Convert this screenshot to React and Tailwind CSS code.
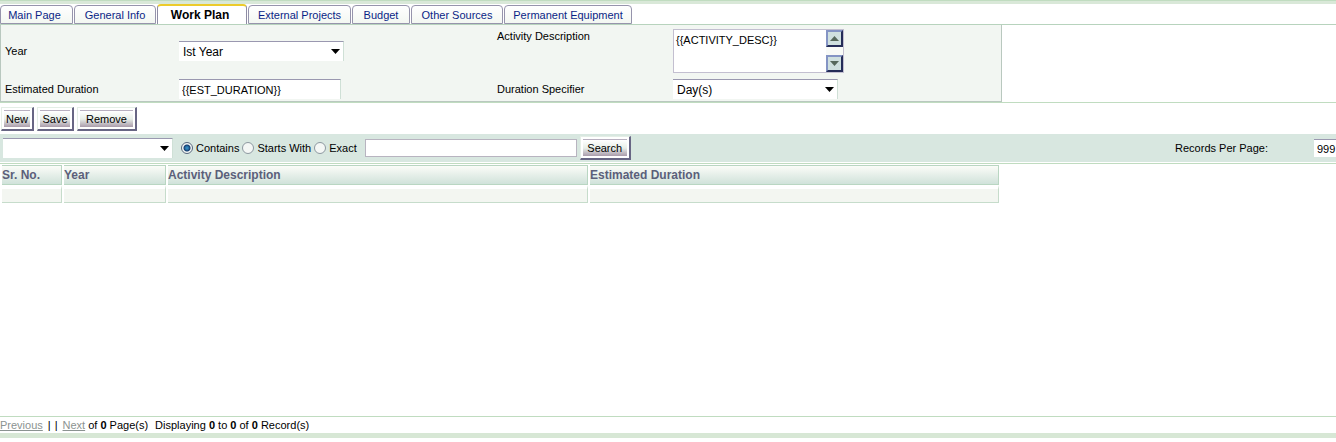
import React, { useState } from 'react';

const tabs = [
    { label: 'Main Page', width: 'w-[73px] pr-1' },
    { label: 'General Info', width: 'w-[82px]' },
    { label: 'Work Plan', width: 'w-[90px] pr-1' },
    { label: 'External Projects', width: 'w-[103px]' },
    { label: 'Budget', width: 'w-[58px]' },
    { label: 'Other Sources', width: 'w-[92px]' },
    { label: 'Permanent Equipment', width: 'w-[128px]' },
];

const columns = [
    { label: 'Sr. No.', width: 'w-[60px]' },
    { label: 'Year', width: 'w-[102px]' },
    { label: 'Activity Description', width: 'w-[420px]' },
    { label: 'Estimated Duration', width: 'w-[409px]' },
];

const matchModes = ['Contains', 'Starts With', 'Exact'];

const Caret = ({ up = false, className = '' }) => (
    <svg width="9" height="5" viewBox="0 0 9 5" className={className} aria-hidden="true">
        <path d={up ? 'M0 5 L4.5 0 L9 5 Z' : 'M0 0 L9 0 L4.5 5 Z'} fill="currentColor" />
    </svg>
);

const BevelButton = ({ children, className = '', ...props }) => (
    <button
        type="button"
        className={`flex h-6 border-t border-l border-t-[#e4eee6] border-l-[#e4eee6] border-r-2 border-b-2 border-r-[#686684] border-b-[#686684] bg-white p-0.5 text-[11px] ${className}`}
        {...props}
    >
        <span className="flex h-full w-full items-center justify-center border-t border-[#b8b0c0] bg-linear-to-b from-white via-[#e8efe8] to-[#aa9cab]">
            {children}
        </span>
    </button>
);

const SelectBox = ({ id, label, options, className = '' }) => (
    <div className={`relative ${className}`}>
        <select
            id={id}
            aria-label={label}
            className="block h-full w-full appearance-none border-t border-r border-t-[#9a98b0] border-r-[#cfe0d6] bg-white pl-1 text-[12px] outline-none"
        >
            {options.map((option) => (
                <option key={option}>{option}</option>
            ))}
        </select>
        <Caret className="pointer-events-none absolute top-2 right-1" />
    </div>
);

const ScrollButton = ({ up = false }) => (
    <button
        type="button"
        aria-label={up ? 'Scroll up' : 'Scroll down'}
        className="flex h-[17px] w-[17px] items-center justify-center border-t-2 border-l-2 border-r-2 border-b-2 border-t-[#8494c4] border-l-[#8494c4] border-r-[#242c58] border-b-[#242c58] bg-[#cfe0df] text-[#56685c]"
    >
        <Caret up={up} />
    </button>
);

const TabBar = () => {
    const [active, setActive] = useState('Work Plan');

    return (
        <nav className="flex h-5 items-end gap-px border-b border-[#b7d3bd] pr-4">
            {tabs.map(({ label, width }) => (
                <button
                    key={label}
                    type="button"
                    onClick={() => setActive(label)}
                    className={`${width} shrink-0 rounded-t-sm border-x whitespace-nowrap ${
                        active === label
                            ? 'h-5 border-t-2 border-x-[#8e8ca4] border-t-[#eccb2c] bg-white text-[12px] font-bold text-black'
                            : 'h-[19px] border-t border-b border-[#9694ac] bg-linear-to-b from-white to-[#f3f7f2] text-[11px] text-[#0a1f86]'
                    }`}
                >
                    {label}
                </button>
            ))}
        </nav>
    );
};

const PlanForm = () => (
    <form className="grid w-3/4 grid-cols-[174px_318px_176px_1fr] border-x border-b border-[#b9c8bf] bg-[#f2f6f2] pl-1">
        <label htmlFor="year" className="self-center">Year</label>
        <SelectBox id="year" options={['Ist Year', '2nd Year', '3rd Year']} className="h-5 w-[165px] self-center" />
        <label htmlFor="activity" className="pt-[3px]">Activity Description</label>
        <div className="my-1 flex h-11 w-[171px] border border-[#c3bfd0] bg-white">
            <textarea
                id="activity"
                defaultValue="{{ACTIVITY_DESC}}"
                className="min-w-0 flex-1 resize-none overflow-hidden bg-transparent px-0.5 pt-0.5 outline-none"
            />
            <div className="flex flex-col justify-between bg-[#f8faf7]">
                <ScrollButton up />
                <ScrollButton />
            </div>
        </div>

        <label htmlFor="estimate" className="self-center">Estimated Duration</label>
        <input
            id="estimate"
            type="text"
            defaultValue="{{EST_DURATION}}"
            className="my-0.5 h-5 w-[162px] border-t border-r border-t-[#9a98b0] border-r-[#cfe0d6] bg-white px-[3px] outline-none"
        />
        <label htmlFor="specifier" className="self-center">Duration Specifier</label>
        <SelectBox id="specifier" options={['Day(s)', 'Month(s)', 'Year(s)']} className="my-0.5 h-5 w-[165px]" />
    </form>
);

const SearchBar = () => {
    const [mode, setMode] = useState('Contains');

    return (
        <div className="flex h-7 items-center overflow-hidden bg-[#d8e7e0] pl-[3px]">
            <SelectBox id="field" label="Search field" options={['']} className="h-5 w-[170px] shrink-0" />
            <div className="ml-2 flex shrink-0 gap-[3px]">
                {matchModes.map((name) => (
                    <label key={name} className="flex items-center gap-[3px]">
                        <input
                            type="radio"
                            name="mode"
                            checked={mode === name}
                            onChange={() => setMode(name)}
                            className="h-3 w-3 appearance-none rounded-full border border-[#8d98a0] bg-[#f4f7f5] checked:border-[#56667c] checked:bg-[radial-gradient(circle,#3188bd_0_1px,#163e70_3px,#f4f7f5_4px)]"
                        />
                        {name}
                    </label>
                ))}
            </div>
            <input
                type="text"
                aria-label="Search text"
                className="ml-2 h-[18px] w-[212px] shrink-0 border border-[#b8b4c0] bg-white px-1 outline-none"
            />
            <BevelButton className="ml-[3px] w-[51px] shrink-0">Search</BevelButton>
            <label htmlFor="per-page" className="ml-auto shrink-0 pr-[46px]">Records Per Page:</label>
            <input
                id="per-page"
                type="text"
                defaultValue="999"
                className="-mr-3 h-[18px] w-[34px] shrink-0 border-t border-[#9a98b0] bg-white px-[3px] outline-none"
            />
        </div>
    );
};

const RecordsTable = () => (
    <table className="table-fixed border-separate border-spacing-x-0.5 border-spacing-y-0 text-left">
        <thead>
            <tr>
                {columns.map(({ label, width }) => (
                    <th
                        key={label}
                        className={`${width} h-5 border-t border-r border-b border-[#b9d6c2] bg-linear-to-b from-[#fbfcf8] to-[#d0e2da] p-0 text-[12px] leading-4 font-bold whitespace-nowrap text-[#5b5f7a]`}
                    >
                        {label}
                    </th>
                ))}
            </tr>
        </thead>
        <tbody>
            <tr>
                {columns.map(({ label }) => (
                    <td key={label} className="h-[18px] border-t-4 border-t-white bg-clip-padding border-r border-b border-r-[#c6dccb] border-b-[#c6dccb] bg-[#f3f6f1] p-0" />
                ))}
            </tr>
        </tbody>
    </table>
);

const Pager = () => (
    <footer className="border-t border-[#c0dcc0]">
        <div className="flex h-4 items-center gap-[3px] whitespace-nowrap">
            <a href="#previous" className="text-[#8b9391] underline">Previous</a>
            <span className="flex gap-1 px-0.5">
                <span>|</span>
                <span>|</span>
            </span>
            <a href="#next" className="text-[#8b9391] underline">Next</a>
            <span>of <b>0</b> Page(s)</span>
            <span className="pl-1">Displaying <b>0</b> to <b>0</b> of <b>0</b> Record(s)</span>
        </div>
        <div className="h-[5px] bg-[#d7e7d5]" />
    </footer>
);

const App = () => (
    <div className="flex min-h-screen flex-col overflow-hidden bg-white pb-1 font-['Liberation_Sans',Arial,sans-serif] text-[11px] leading-4 text-black">
        <div className="mb-px h-1 border-t border-[#c0dcc0] bg-[#d9e8d8]" />
        <TabBar />
        <div className="border-b border-[#c0dcc0]">
            <PlanForm />
        </div>
        <div className="flex gap-[3px] px-px pt-1 pb-[3px]">
            <BevelButton className="w-[33px]">New</BevelButton>
            <BevelButton className="w-[37px]">Save</BevelButton>
            <BevelButton className="w-[60px]">Remove</BevelButton>
        </div>
        <SearchBar />
        <div className="my-px h-px bg-[#c0dcc0]" />
        <main className="flex-1">
            <RecordsTable />
        </main>
        <Pager />
    </div>
);

export default App;
